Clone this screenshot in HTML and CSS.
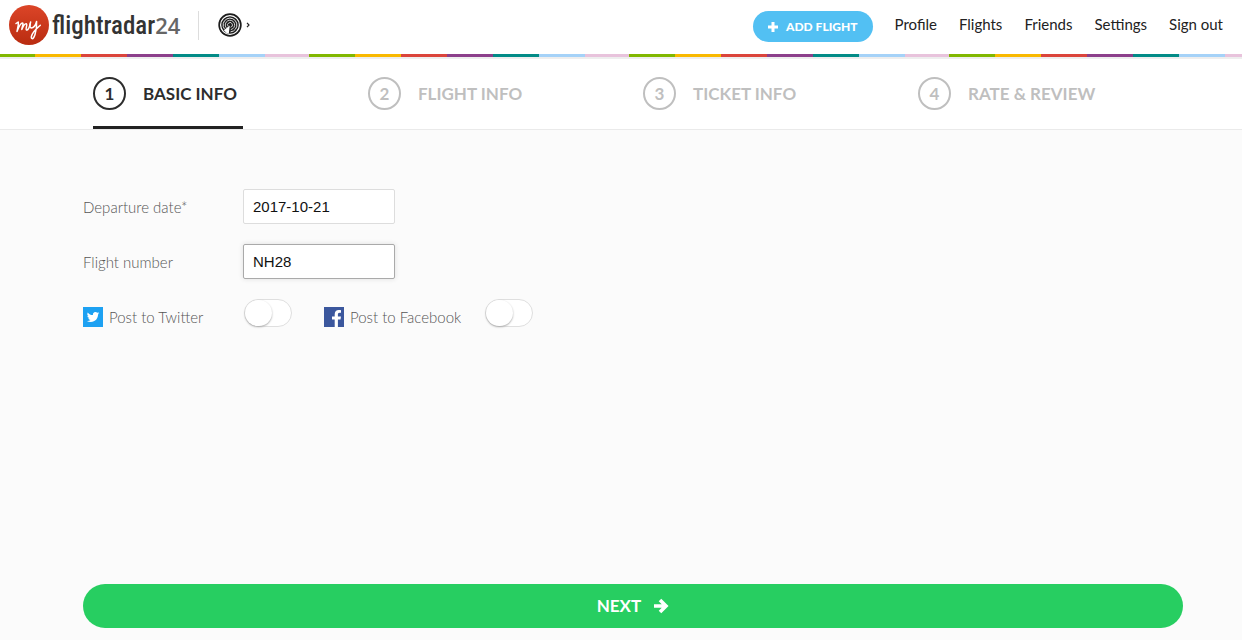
FILE: index.html
```html
<!DOCTYPE html>
<html lang="en">
<head>
<meta charset="utf-8">
<meta name="viewport" content="width=device-width, initial-scale=1">
<title>myFlightradar24 - Add flight</title>
<link rel="stylesheet" href="styles.css">
</head>
<body>
<header class="topbar">
  <a class="logo" href="#">
    <svg class="logo-mark" viewBox="0 0 40 40" aria-hidden="true">
      <defs><linearGradient id="red" x1="0" y1="0" x2="0" y2="1"><stop offset="0" stop-color="#dc4528"/><stop offset="1" stop-color="#b92c10"/></linearGradient></defs>
      <circle cx="20" cy="20" r="20" fill="url(#red)"/>
      <g fill="none" stroke="#fff" stroke-width="1.5" stroke-linecap="round" stroke-linejoin="round">
        <path d="M7 18.500l2.200-1.500c.6 2.500-.6 6-1.200 9.500 1.500-4 3.500-8.500 5.500-8.500 1.300 0-.6 4.500-.7 6.500 1.200-3 3-6 4.500-5.800 1.500.4-1.200 5.800.2 6.300 1.500.3 3-3 3.800-6.500"/>
        <path d="M21.600 17c-.8 3.500-1 6 .6 6 2.400-.2 4.600-3.500 5.400-6.500.3 5-.5 9.500-1.600 13-.8 2.500-2 4.800-3.200 4-1.600-1.500 1.200-6.500 4.200-9.300 1.500-1.500 3-2.800 4.300-4"/>
      </g>
    </svg>
    <span class="logo-text">flightradar<span class="logo-num">24</span></span>
  </a>
  <button class="switcher" type="button" aria-label="Switch site">
    <svg class="radar" viewBox="0 0 24 24" aria-hidden="true">
      <circle cx="12" cy="12" r="11.700" fill="#1c1c1c"/>
      <g fill="none" stroke="#fff">
        <circle cx="12" cy="12" r="9.400" stroke-width="1.200"/>
        <path stroke-width=".9" d="M6.500 16.200A6.900 6.900 0 1 1 12.500 18.900"/>
        <path stroke-width=".8" d="M8.200 14.800A4.700 4.700 0 1 1 12.800 16.600"/>
        <path stroke-width=".8" d="M10.200 13.500A2.400 2.400 0 1 1 12.500 14.300"/>
      </g>
      <path d="M11.800 12.500L5.800 17.200Q8 20.300 10.800 20.600Z" fill="#fff"/>
    </svg>
    <svg class="chevron" viewBox="0 0 4 6" aria-hidden="true"><path d="M1 .8L3 3 1 5.200" fill="none" stroke="#222" stroke-width="1.200"/></svg>
  </button>
  <nav class="menu">
    <button class="add" type="button">
      <svg class="plus" viewBox="0 0 10 10" aria-hidden="true"><path d="M5 0v10M0 5h10" stroke="#fff" stroke-width="3"/></svg>
      ADD FLIGHT
    </button>
    <a href="#">Profile</a>
    <a href="#">Flights</a>
    <a href="#">Friends</a>
    <a href="#">Settings</a>
    <a href="#">Sign out</a>
  </nav>
</header>
<div class="stripe"></div>
<nav class="steps">
  <ol class="steps-list">
    <li class="step"><a class="step-link current" href="#" aria-current="step"><span class="step-no">1</span>BASIC INFO</a></li>
    <li class="step"><a class="step-link" href="#"><span class="step-no">2</span>FLIGHT INFO</a></li>
    <li class="step"><a class="step-link" href="#"><span class="step-no">3</span>TICKET INFO</a></li>
    <li class="step"><a class="step-link" href="#"><span class="step-no">4</span>RATE &amp; REVIEW</a></li>
  </ol>
</nav>
<form class="form">
  <div class="row">
    <label class="label" for="date">Departure date*</label>
    <input class="field" id="date" type="text" value="2017-10-21">
  </div>
  <div class="row">
    <label class="label" for="number">Flight number</label>
    <input class="field active" id="number" type="text" value="NH28">
  </div>
  <div class="social">
    <div class="share">
      <label class="share-label" for="tw">
        <svg class="brand" viewBox="0 0 20 20" aria-hidden="true"><path fill="#1da1f2" d="M0 0h20v20H0z"/><path fill="#fff" transform="translate(3.800 3.800) scale(.52)" d="M23.950 4.570a10 10 0 0 1-2.820.77 4.960 4.960 0 0 0 2.160-2.720c-.95.550-2 .95-3.130 1.180a4.920 4.920 0 0 0-8.380 4.480C7.690 8.100 4.070 6.130 1.640 3.160a4.920 4.920 0 0 0 1.520 6.570 4.900 4.900 0 0 1-2.230-.61v.06a4.920 4.920 0 0 0 3.950 4.830 5 5 0 0 1-2.210.08 4.940 4.940 0 0 0 4.600 3.420A9.870 9.870 0 0 1 0 19.540a13.990 13.990 0 0 0 7.550 2.210c9.050 0 14-7.500 14-13.980 0-.21 0-.42-.02-.63a9.940 9.940 0 0 0 2.460-2.550z"/></svg>
        Post to Twitter
      </label>
      <input class="toggle" id="tw" type="checkbox">
    </div>
    <div class="share">
      <label class="share-label" for="fb">
        <svg class="brand" viewBox="0 0 20 20" aria-hidden="true"><path fill="#3b579d" d="M0 0h20v20H0z"/><path fill="#fff" d="M10.700 20v-7.500H8V9.600h2.700V7.300c0-2.700 1.600-4.200 4.100-4.200 1.100 0 2.200.2 2.200.2v2.500h-1.300c-1.400 0-1.800.8-1.800 1.700v2.100H17l-.5 2.900h-2.600V20z"/></svg>
        Post to Facebook
      </label>
      <input class="toggle" id="fb" type="checkbox">
    </div>
  </div>
  <button class="next" type="button">NEXT
    <svg class="arrow" viewBox="0 0 16 16" aria-hidden="true"><path d="M1 8h12M7 2l6 6-6 6" fill="none" stroke="#fff" stroke-width="3.600"/></svg>
  </button>
</form>
</body>
</html>
```
FILE: styles.css
```css
* { box-sizing: border-box; }

body {
  display: flex;
  flex-direction: column;
  min-height: 100vh;
  margin: 0;
  background: #fbfbfb;
  color: #222;
  font-family: Lato, sans-serif;
}

a { color: inherit; text-decoration: none; }
button { border: 0; padding: 0; background: none; color: inherit; font-family: inherit; cursor: pointer; }

.topbar {
  display: flex;
  align-items: center;
  padding: 0 19px 4px 9px;
  min-height: 54px;
  background: #fff;
}

.logo { display: flex; align-items: center; gap: 3px; }
.logo-mark { width: 40px; height: 40px; }
.logo-text {
  color: #333;
  font-family: "Roboto Condensed", Roboto, sans-serif;
  font-size: 25px;
  font-weight: 500;
  line-height: 32px;
}
.logo-num { color: #666; font-family: "Open Sans", sans-serif; font-size: 22px; font-weight: 600; }

.switcher {
  display: flex;
  align-items: center;
  gap: 4px;
  height: 29px;
  margin-left: 18px;
  padding-left: 19px;
  border-left: 1px solid #ddd;
}
.radar { width: 24px; height: 24px; }
.chevron { width: 4px; height: 6px; }

.menu { display: flex; align-items: center; gap: 22px; margin-left: auto; padding-bottom: 2px; font-size: 15px; }
.add {
  display: flex;
  align-items: center;
  gap: 8px;
  height: 31px;
  margin-top: 5px;
  padding: 0 15px;
  border-radius: 16px;
  background: #52c0f3;
  color: #fff;
  font-size: 12px;
  font-weight: 900;
}
.plus { width: 10px; height: 10px; }

.stripe {
  height: 5px;
  border-bottom: 2px solid #eee;
  background: repeating-linear-gradient(90deg,
    #81b700 0 46px, #f9b900 46px 92px, #db443b 92px 138px, #8c3f8b 138px 184px,
    #028b87 184px 230px, #a5d2f8 230px 276px, #e8c3dc 276px 320px) -11px 0 / 320px 3px repeat-x;
}

.steps { padding: 0 59px 0 83px; border-bottom: 1px solid #eaeaea; background: #fff; }
.steps-list { display: flex; margin: 0; padding: 0; list-style: none; }
.step { flex: 1; padding-left: 10px; }
.step-link {
  display: inline-flex;
  align-items: center;
  gap: 17px;
  height: 70px;
  padding: 1px 6px 0 0;
  border-bottom: 3px solid transparent;
  color: #bfbfbf;
  font-size: 17px;
  font-weight: 700;
}
.step-no {
  display: flex;
  align-items: center;
  justify-content: center;
  width: 33px;
  height: 33px;
  border: 2px solid;
  border-radius: 50%;
}
.current { border-color: #222; color: #2d2d2d; }

.form { display: flex; flex: 1; flex-direction: column; padding: 59px 59px 12px 83px; }
.row { display: flex; align-items: center; margin-bottom: 20px; }
.label, .share-label { color: #555; font-size: 15px; font-weight: 300; }
.label { width: 160px; }
.field {
  width: 152px;
  height: 35px;
  padding: 0 9px;
  border: 1px solid #ddd;
  border-radius: 2px;
  background: #fff;
  color: #111;
  font-family: "Liberation Sans", sans-serif;
  font-size: 15px;
}
.active { border-color: #aaa; box-shadow: 0 0 5px #ddd; outline: 0; }

.social { display: flex; gap: 32px; }
.share { display: flex; align-items: flex-start; }
.share-label { display: flex; align-items: center; gap: 6px; width: 161px; padding-top: 8px; }
.brand { width: 20px; height: 20px; }
.toggle {
  width: 48px;
  height: 28px;
  margin: 0;
  border: 1px solid #dfdfdf;
  border-radius: 14px;
  background: #fff;
  appearance: none;
}
.toggle::before {
  display: block;
  width: 27px;
  height: 26px;
  border-radius: 13px;
  background: #fff;
  box-shadow: 0 1px 2px #aaa;
  content: "";
}
.toggle:checked::before { margin-left: auto; }

.next {
  display: flex;
  align-items: center;
  justify-content: center;
  gap: 12px;
  height: 44px;
  margin-top: auto;
  padding-bottom: 1px;
  border-radius: 22px;
  background: #27ce61;
  color: #fff;
  font-size: 17px;
  font-weight: 700;
}
.arrow { width: 16px; height: 16px; }
```
